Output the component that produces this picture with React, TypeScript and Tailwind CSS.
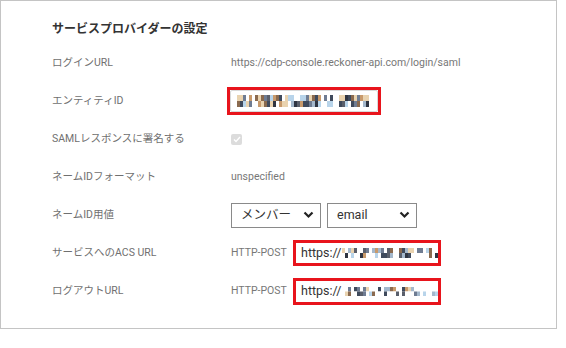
import React from 'react';

const FONT = { fontFamily: 'Roboto, "Noto Sans CJK JP", sans-serif' };

// Pixelated (obscured) text drawn as a mosaic strip
const MOSAIC_COLORS = ['#3f4a5c', '#8a6a4f', '#b8d4ea', '#5a5f6b', '#e9d3b0', '#6f7c92', '#c89a6c', '#2f3542', '#a4b8cc', '#ffffff'];

function Mosaic({ width, height, seed, light }: { width: number; height: number; seed: number; light?: boolean }) {
    const cells: React.ReactNode[] = [];
    let s = seed;
    const rnd = () => {
        s = (s * 9301 + 49297) % 233280;
        return s / 233280;
    };
    const cw = 3;
    const rows = 2;
    const ch = height / rows;
    for (let x = 0; x < width; x += cw) {
        for (let r = 0; r < rows; r++) {
            const v = rnd();
            let color = MOSAIC_COLORS[Math.floor(v * MOSAIC_COLORS.length)];
            if (light && rnd() < 0.45) color = '#ffffff';
            if (!light && rnd() < 0.15) color = '#ffffff';
            cells.push(<rect key={`${x}-${r}`} x={x} y={r * ch} width={cw} height={ch} fill={color} />);
        }
    }
    return (
        <svg width={width} height={height} className="block shrink-0">
            {cells}
        </svg>
    );
}

function Row({ label, children }: { label: string; children: React.ReactNode }) {
    return (
        <div className="flex h-[38px] items-center">
            <div className="w-[179px] shrink-0 text-[10.5px] text-[#707070]">{label}</div>
            <div className="flex items-center">{children}</div>
        </div>
    );
}

function Chevron() {
    return (
        <svg width="11" height="8" viewBox="0 0 11 8" className="shrink-0">
            <path d="M1.5 1.5 L5.5 5.5 L9.5 1.5" stroke="#222" strokeWidth="2.2" fill="none" />
        </svg>
    );
}

function Select({ value, width }: { value: string; width: number }) {
    return (
        <div
            className="flex h-[25px] items-center justify-between border border-[#8a8a8a] bg-white pl-[9px] pr-[6px] text-[12.5px] text-[#333]"
            style={{ width }}
        >
            <span>{value}</span>
            <Chevron />
        </div>
    );
}

export default function App() {
    return (
        <div className="h-[348px] w-[566px] bg-white" style={FONT}>
            <div className="h-[329px] w-[557px] border border-[#c4c4c4] pl-[51px] pt-[18px]">
                <h2 className="h-[20px] text-[12px] font-bold leading-[20px] text-[#333]">サービスプロバイダーの設定</h2>
                <div className="mt-[5px]">
                    <Row label="ログインURL">
                        <span className="text-[10.5px] text-[#777]">https://cdp-console.reckoner-api.com/login/saml</span>
                    </Row>
                    <Row label="エンティティID">
                        <div className="-ml-[4px] border-[3px] border-[#e8141c]">
                            <div className="flex h-[22px] w-[148px] items-center rounded-[2px] border border-[#d9d9d9] bg-white pl-[6px]">
                                <Mosaic width={132} height={12} seed={7} />
                            </div>
                        </div>
                    </Row>
                    <Row label="SAMLレスポンスに署名する">
                        <div className="flex h-[11px] w-[11px] items-center justify-center rounded-[2px] bg-[#dcdcdc]">
                            <svg width="8" height="7" viewBox="0 0 8 7">
                                <path d="M1 3.5 L3 5.5 L7 1" stroke="#fff" strokeWidth="1.4" fill="none" />
                            </svg>
                        </div>
                    </Row>
                    <Row label="ネームIDフォーマット">
                        <span className="text-[10.5px] text-[#777]">unspecified</span>
                    </Row>
                    <Row label="ネームID用値">
                        <div className="flex gap-[6px]">
                            <Select value="メンバー" width={90} />
                            <Select value="email" width={90} />
                        </div>
                    </Row>
                    <Row label="サービスへのACS URL">
                        <span className="w-[62px] text-[10.5px] text-[#777]">HTTP-POST</span>
                        <div className="flex h-[26px] w-[148px] items-center border-[3px] border-[#e8141c] bg-white pl-[5px]">
                            <span className="text-[12.5px] text-[#333]">https://</span>
                            <Mosaic width={96} height={10} seed={31} light />
                        </div>
                    </Row>
                    <Row label="ログアウトURL">
                        <span className="w-[62px] text-[10.5px] text-[#777]">HTTP-POST</span>
                        <div className="flex h-[27px] w-[148px] items-center border-[3px] border-[#e8141c] bg-white pl-[5px]">
                            <span className="text-[12.5px] text-[#333]">https://</span>
                            <Mosaic width={96} height={9} seed={53} light />
                        </div>
                    </Row>
                </div>
            </div>
        </div>
    );
}
